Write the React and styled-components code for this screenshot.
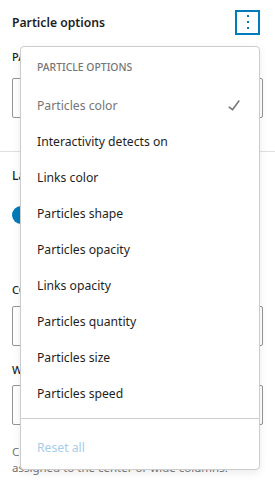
import React from 'react';
import styled, {createGlobalStyle} from 'styled-components';

const GlobalStyle = createGlobalStyle`
  body {
    margin: 0;
    background: #fff;
    font-family: 'Noto Sans', 'Liberation Sans', sans-serif;
    color: #1e1e1e;
  }
`;

const menuItems = [
  {label: 'Particles color', checked: true},
  {label: 'Interactivity detects on'},
  {label: 'Links color'},
  {label: 'Particles shape'},
  {label: 'Particles opacity'},
  {label: 'Links opacity'},
  {label: 'Particles quantity'},
  {label: 'Particles size'},
  {label: 'Particles speed'}
];

const CheckIcon = () => (
  <svg width="24" height="24" viewBox="0 0 24 24" fill="#757575">
    <path d="M16.7 7.1l-6.3 8.5-3.2-2.4-.9 1.2 4.4 3.3 7.2-9.7z" />
  </svg>
);

const MoreIcon = () => (
  <svg width="24" height="24" viewBox="0 0 24 24" fill="#007cba">
    <path d="M11 5h2v2h-2zM11 11h2v2h-2zM11 17h2v2h-2z" />
  </svg>
);

export default function App() {
  return (
    <>
      <GlobalStyle />
      <Sidebar>
        <Header>
          <Title>Particle options</Title>
          <MenuButton aria-label="View options">
            <MoreIcon />
          </MenuButton>
        </Header>

        <Section pad="15px 12px 33px">
          <FieldLabel m="0 0 13px">Particles color</FieldLabel>
          <InputBox />
        </Section>

        <Section pad="15px 12px 20px">
          <PanelTitle>Layout</PanelTitle>
          <ToggleRow>
            <Toggle />
            <ToggleLabel>Inner blocks use content width</ToggleLabel>
          </ToggleRow>
          <ToggleHelp>Nested blocks use content width with options for full and wide widths.</ToggleHelp>
          <FieldLabel m="6px 0 8px">Content</FieldLabel>
          <InputBox />
          <FieldLabel m="16px 0 7px">Wide</FieldLabel>
          <InputBox />
          <Help>Customize the width for all elements that are assigned to the center or wide columns.</Help>
        </Section>

        <Popover>
          <MenuGroup pad="8px 8px 7px">
            <GroupHeading>Particle options</GroupHeading>
            {menuItems.map(item => (
              <MenuItem key={item.label} muted={item.checked}>
                <span>{item.label}</span>
                {item.checked && <CheckIcon />}
              </MenuItem>
            ))}
          </MenuGroup>
          <MenuGroup pad="10px 8px 4px" bordered>
            <MenuItem disabled>Reset all</MenuItem>
          </MenuGroup>
        </Popover>
      </Sidebar>
    </>
  );
}

const Sidebar = styled.div`
  position: relative;
  width: 275px;
  height: 483px;
  overflow: hidden;
`;

const Header = styled.div`
  display: flex;
  align-items: center;
  justify-content: space-between;
  padding: 10px 15px 0 12px;
  height: 24px;
`;

const Title = styled.h2`
  margin: 0;
  font-size: 12.2px;
  font-weight: 600;
  color: #1e1e1e;
`;

const MenuButton = styled.button`
  display: flex;
  align-items: center;
  justify-content: center;
  width: 25px;
  height: 25px;
  padding: 0;
  background: #fff;
  border: 2px solid #007cba;
  border-radius: 0;
  box-sizing: border-box;
  & svg {
    flex: none;
  }
`;

const Section = styled.div`
  padding: ${({pad}) => pad};
  border-bottom: 1px solid #e0e0e0;
  &:last-of-type {
    border-bottom: none;
  }
`;

const FieldLabel = styled.div`
  margin: ${({m}) => m};
  font-size: 11px;
  font-weight: 500;
  line-height: 16px;
  text-transform: uppercase;
  color: #1e1e1e;
`;

const InputBox = styled.div`
  height: 40px;
  box-sizing: border-box;
  border: 1px solid #949494;
  border-radius: 2px;
`;

const PanelTitle = styled.h2`
  margin: 0 0 21px;
  font-size: 12.2px;
  font-weight: 500;
  line-height: 18px;
  color: #1e1e1e;
`;

const ToggleRow = styled.div`
  display: flex;
  align-items: center;
  gap: 8px;
  height: 18px;
`;

const Toggle = styled.span`
  flex: none;
  width: 36px;
  height: 18px;
  border-radius: 9px;
  background: #007cba;
`;

const ToggleLabel = styled.span`
  font-size: 12px;
  white-space: nowrap;
`;

const ToggleHelp = styled.p`
  margin: 4px 0 0 44px;
  height: 48px;
  overflow: hidden;
  font-size: 12px;
  line-height: 16px;
  color: #757575;
`;

const Help = styled.p`
  margin: 19px 0 0;
  font-size: 11.5px;
  line-height: 16px;
  color: #757575;
`;

const Popover = styled.div`
  position: absolute;
  top: 46px;
  left: 20px;
  width: 240px;
  box-sizing: border-box;
  background: #fff;
  border: 1px solid #ccc;
  border-radius: 4px;
  box-shadow: 0 3px 8px rgba(0, 0, 0, 0.08);
`;

const MenuGroup = styled.div`
  padding: ${({pad}) => pad};
  border-top: ${({bordered}) => bordered ? '1px solid #ccc' : 'none'};
`;

const GroupHeading = styled.div`
  height: 24px;
  line-height: 24px;
  margin-bottom: 8px;
  padding: 0 8px;
  font-size: 10.4px;
  font-weight: 500;
  text-transform: uppercase;
  color: #757575;
`;

const MenuItem = styled.div`
  display: flex;
  align-items: center;
  justify-content: space-between;
  height: 36px;
  padding: 0 5px 0 8px;
  font-size: 12.2px;
  color: ${({muted, disabled}) => disabled ? '#a7cde7' : muted ? '#757575' : '#1e1e1e'};
`;
